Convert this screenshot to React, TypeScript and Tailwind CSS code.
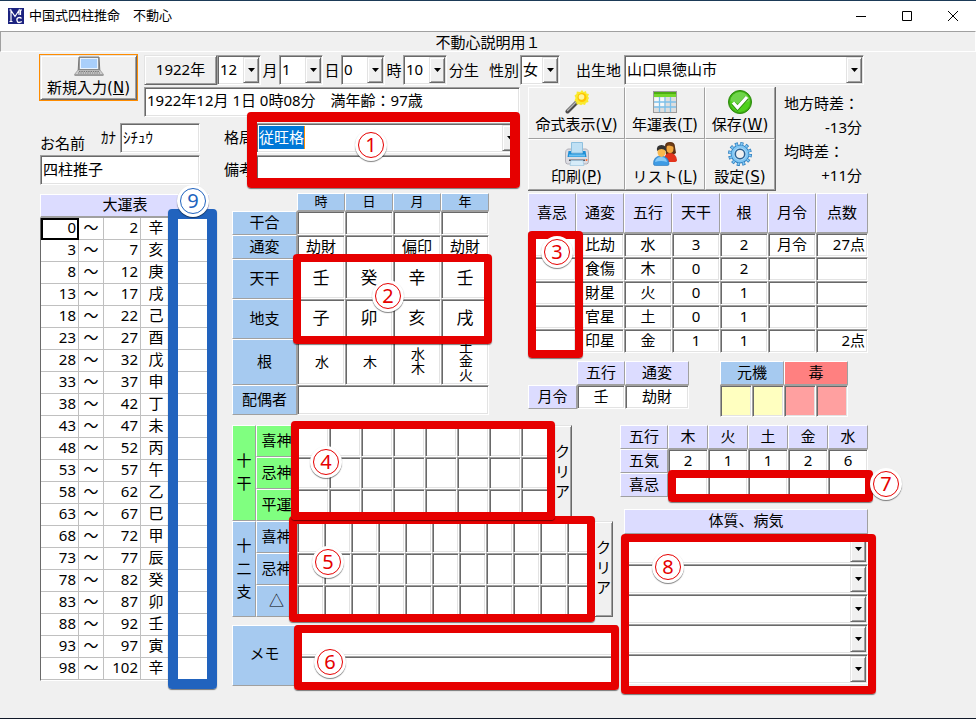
import React, { useState } from 'react';
import clsx from 'clsx';

const RAISED = 'border border-t-white border-l-white border-r-[#a0a0a0] border-b-[#a0a0a0]';
const SUNKEN =
  'border border-t-[#a0a0a0] border-l-[#a0a0a0] border-r-white border-b-white shadow-[inset_1px_1px_0_#696969,inset_-1px_-1px_0_#e3e3e3]';
const BUTTON_3D =
  'border border-t-[#e3e3e3] border-l-[#e3e3e3] border-r-[#696969] border-b-[#696969] bg-[#f0f0f0] shadow-[inset_1px_1px_0_#fff,inset_-1px_-1px_0_#a0a0a0]';

const LILAC = 'bg-[#dcdcff]';
const SKY = 'bg-[#a6caf0]';
const GREEN = 'bg-[#80ff80]';

const luckStems = '辛亥庚戌己酉戊申丁未丙午乙巳甲辰癸卯壬寅辛'.split('');
const luckRows = luckStems.map((stem, i) => ({
  from: i === 0 ? 0 : i * 5 - 2,
  to: i * 5 + 2,
  stem,
}));

const pillars = [
  { name: '時', change: '劫財', stem: '壬', branch: '子', root: '水' },
  { name: '日', change: '', stem: '癸', branch: '卯', root: '木' },
  { name: '月', change: '偏印', stem: '辛', branch: '亥', root: '水木' },
  { name: '年', change: '劫財', stem: '壬', branch: '戌', root: '土金火' },
];

const pointHeads = ['喜忌', '通変', '五行', '天干', '根', '月令', '点数'];
const pointRows = [
  ['比劫', '水', '3', '2', '月令', '27点'],
  ['食傷', '木', '0', '2', '', ''],
  ['財星', '火', '0', '1', '', ''],
  ['官星', '土', '0', '1', '', ''],
  ['印星', '金', '1', '1', '', '2点'],
];

const elements = [
  { name: '木', count: 2 },
  { name: '火', count: 1 },
  { name: '土', count: 1 },
  { name: '金', count: 2 },
  { name: '水', count: 6 },
];

/* ---------- icons ---------- */

const LaptopIcon = () => (
  <svg width="30" height="21" viewBox="0 0 30 21">
    <path d="M5 1h20l.8 13H4.200z" fill="#9a9a9a" stroke="#777" />
    <rect x="6.500" y="2.500" width="17" height="10" fill="#a9cffb" stroke="#e8f3ff" />
    <path d="M4 14h22l3.500 4.500H.5z" fill="#cfcfcf" stroke="#8c8c8c" strokeWidth=".7" />
    <path d="M5 15.500h20M4 17h22" stroke="#777" strokeDasharray="1.500 .8" />
    <path d="M.5 18.500h29v1.500H.5z" fill="#9b9b9b" />
  </svg>
);

const WandIcon = () => (
  <svg width="24" height="24" viewBox="0 0 24 24">
    <path d="M2.500 21.500 13 11" stroke="#4a4a4a" strokeWidth="4" strokeLinecap="round" />
    <path d="M2.500 20.500 12.500 10.500" stroke="#b5b5b5" strokeWidth="1.500" strokeLinecap="round" />
    <path d="m17 0 1.600 2 2.400-1 .5 2.500 2.500.5-1 2.400 1 1.600-1 2 .5 2-2.500.7-1 2.300-2.400-.8-1.600 1-2-1-2.400.3-.4-2.600-1.700-1.500 1-2.400-1-2.400L11.500 4l.3-2.400 3.400.3z" fill="#f9ea2e" />
    <circle cx="17" cy="7.500" r="4.500" fill="#ffc400" />
    <circle cx="16.500" cy="7" r="2.800" fill="#fff59a" />
  </svg>
);

const SheetIcon = () => (
  <svg width="24" height="24" viewBox="0 0 24 24">
    <rect x=".5" y="1.500" width="23" height="21" fill="#dedede" stroke="#9b9b9b" />
    <rect x="1" y="2" width="22" height="5" fill="#74d62c" />
    <rect x="1" y="2" width="22" height="2" fill="#4cae12" />
    <path d="M1.500 7.500h10v9h-10z" fill="#f8f8f8" />
    <path d="M6.500 7v15M12 7v15M17.500 7v15M1 12h22M1 17h22" stroke="#7cc0ea" strokeWidth="1.300" />
  </svg>
);

const CheckIcon = () => (
  <svg width="24" height="24" viewBox="0 0 24 24">
    <circle cx="12" cy="12" r="11.500" fill="#3fae14" stroke="#2b8a0c" />
    <circle cx="12" cy="12" r="10" fill="#4fd11c" />
    <path d="M2.500 11a9.500 9 0 0 1 19 0q-9.500 5-19 0z" fill="#6fd44a" />
    <path d="m5 13 4.500 5 9.500-10.500" fill="none" stroke="#2f8d10" strokeWidth="4.500" />
    <path d="m5 12.500 4.500 5L19 7" fill="none" stroke="#fff" strokeWidth="3.300" />
  </svg>
);

const PrinterIcon = () => (
  <svg width="24" height="24" viewBox="0 0 24 24">
    <path d="M2.500 7h19q2 1 2 4v8q0 3-2 3h-19q-2 0-2-3v-8q0-3 2-4z" fill="#dcdce2" stroke="#9a9aa4" strokeWidth=".7" />
    <path d="M3.500 9h17l1 6h-19z" fill="#1f8fd6" />
    <path d="M4 12.500h16v2H4z" fill="#6ec2f2" />
    <path d="M6.500.5h11V11h-11z" fill="#bfe0f4" stroke="#8fc0de" />
    <path d="M4 17.500h16V19H4z" fill="#54545e" />
    <path d="M6 18.500h12l1 5H5z" fill="#d6ecf9" stroke="#9cc6df" strokeWidth=".7" />
    <circle cx="21.500" cy="18" r="1" fill="#ff6a2a" />
  </svg>
);

const PeopleIcon = () => (
  <svg width="24" height="24" viewBox="0 0 24 24">
    <path d="M12 4q0-4 5-4t5 5l1 6-3 2h-7z" fill="#5d3213" />
    <path d="M11 19q0-8 6-8t7 7q0 2-3 2H11z" fill="#e3341c" />
    <ellipse cx="17" cy="6.500" rx="3.500" ry="4.500" fill="#f4a93f" />
    <path d="M13 5q2-3 8 0l-1-3-4-1.500z" fill="#6f3f19" />
    <path d="M.5 22q0-8 7.500-8t8 8q0 1.500-2 1.500H2.500q-2 0-2-1.500z" fill="#3e9be4" stroke="#2574b9" strokeWidth=".6" />
    <path d="M2 20q1-5 6-5t6 5q-6-2-12 0z" fill="#8acbf7" />
    <ellipse cx="8.500" cy="10" rx="4" ry="5" fill="#f9b84e" />
    <path d="M4 9q-1-6 4.500-6T13 9q-2-2-4.500-2T4 9z" fill="#333" />
  </svg>
);

const GearIcon = () => (
  <svg width="24" height="24" viewBox="0 0 24 24">
    <circle cx="12" cy="12" r="10" fill="none" stroke="#2f7fbe" strokeWidth="4" strokeDasharray="3 2.236" />
    <circle cx="12" cy="12" r="9.400" fill="#2f7fbe" />
    <circle cx="12" cy="12" r="10" fill="none" stroke="#7fc6f4" strokeWidth="2.400" strokeDasharray="1.800 3.436" strokeDashoffset="-.6" />
    <circle cx="12" cy="12" r="8.500" fill="#7fc6f4" />
    <circle cx="12" cy="12" r="6.500" fill="#a9d8f8" />
    <circle cx="12" cy="12" r="4.700" fill="#f0f0f0" stroke="#2c6294" strokeWidth="1.500" />
  </svg>
);

const AppIcon = () => (
  <svg width="16" height="16" viewBox="0 0 16 16" fill="none">
    <rect width="16" height="16" fill="#1c2380" />
    <path d="M1.500 13.500h3M3 13V2.500l4 6 4-6V7M1.500 2h2M10.500 2H14M12.500 2v5" stroke="#fff" strokeWidth="1.200" />
    <path d="M13.500 10.500q-1-1.500-3-.8t-1.500 2.800 2 2 2.800-1" stroke="#fff" strokeWidth="1.300" />
  </svg>
);

/* ---------- controls ---------- */

const DropArrow = ({ className = '' }: { className?: string }) => (
  <span className={clsx('pointer-events-none flex w-4 items-center justify-center', BUTTON_3D, className)}>
    <svg width="7" height="4" viewBox="0 0 7 4" className="shrink-0">
      <path d="M0 0h7L3.500 4z" />
    </svg>
  </span>
);

type ComboProps = { id?: string; label?: string; value?: string; className?: string };

const Combo = ({ id, label, value = '', className }: ComboProps) => (
  <div className={clsx('relative h-[30px] bg-white', SUNKEN, className)}>
    <select id={id} aria-label={label} className="block h-[26px] w-full appearance-none bg-transparent pl-0.5 outline-none">
      <option>{value}</option>
    </select>
    <DropArrow className="absolute inset-y-px right-px" />
  </div>
);

const Th = ({ className, children, ...rest }: React.ThHTMLAttributes<HTMLTableCellElement>) => (
  <th className={clsx('p-0 pb-0.5 text-center font-normal', RAISED, className)} {...rest}>
    {children}
  </th>
);

const Td = ({ className, children, ...rest }: React.TdHTMLAttributes<HTMLTableCellElement>) => (
  <td className={clsx('p-0 pb-0.5 text-center', SUNKEN, className ?? 'bg-white')} {...rest}>
    {children}
  </td>
);

const CellInput = ({ label }: { label: string }) => (
  <input aria-label={label} className="block h-4 w-full bg-transparent text-center outline-none" />
);

type ToolProps = { icon: React.ReactNode; text: string; accessKey: string };

const AccessKey = ({ children }: { children: string }) => (
  <span className="font-['DejaVu_Sans']">(<u>{children}</u>)</span>
);

const ToolButton = ({ icon, text, accessKey }: ToolProps) => (
  <button accessKey={accessKey} className={clsx('flex flex-col items-center pt-0.5', RAISED)}>
    {icon}
    <span className="whitespace-nowrap leading-5">
      {text}<AccessKey>{accessKey}</AccessKey>
    </span>
  </button>
);

type MarkerProps = { n: number; box: string; badge: string; thick?: boolean; blue?: boolean };

/* highlighted frame with a numbered badge */
const Marker = ({ n, box, badge, thick, blue }: MarkerProps) => (
  <div className={clsx('pointer-events-none absolute', box)}>
    <div
      className={clsx(
        'absolute inset-0 rounded-[4px] shadow-[0_1px_1px_rgba(0,0,0,0.5)]',
        thick ? 'border-[10px]' : 'border-8',
        blue ? 'border-[#2163be]' : 'border-[#e60000]'
      )}
    />
    <div className={clsx('absolute flex size-[32px] items-center justify-center rounded-full bg-white shadow-[0_1px_1px_rgba(0,0,0,0.5)]', badge)}>
      <span
        className={clsx(
          'flex size-[26px] items-center justify-center rounded-full border text-xl leading-none',
          blue ? 'border-[#2163be] text-[#2163be]' : 'border-[#e60000] text-[#e60000]'
        )}
      >
        {n}
      </span>
    </div>
  </div>
);

/* ---------- sections ---------- */

const TitleBar = () => (
  <header className="flex h-[30px] items-center bg-white pl-2">
    <AppIcon />
    <h1 className="ml-[5px] flex-1 pb-0.5 text-[13px] leading-5">中国式四柱推命　不動心</h1>
    <button aria-label="最小化" className="flex h-full w-[46px] items-center justify-center">
      <svg width="10" height="10" viewBox="0 0 10 10"><path d="M0 5.500h10" stroke="#000" /></svg>
    </button>
    <button aria-label="最大化" className="flex h-full w-[46px] items-center justify-center">
      <svg width="10" height="10" viewBox="0 0 10 10"><path d="M.5.5h9v9h-9z" stroke="#000" fill="none" /></svg>
    </button>
    <button aria-label="閉じる" className="flex h-full w-[46px] items-center justify-center">
      <svg width="10" height="10" viewBox="0 0 10 10"><path d="m0 0 10 10M10 0 0 10" stroke="#000" /></svg>
    </button>
  </header>
);

const BirthRow = () => (
  <div className="col-span-4 flex h-[31px] items-center whitespace-nowrap pt-px">
    <div className={clsx('flex h-[30px] w-[73px] items-center justify-center pb-0.5', BUTTON_3D)}>1922年</div>
    <Combo id="month" value="12" className="w-11" />
    <label htmlFor="month" className="w-[18px] text-center">月</label>
    <Combo id="day" value="1" className="w-11" />
    <label htmlFor="day" className="w-[18px] text-center">日</label>
    <Combo id="hour" value="0" className="w-11" />
    <label htmlFor="hour" className="w-[18px] text-center">時</label>
    <Combo id="minute" value="10" className="w-11" />
    <label htmlFor="minute" className="ml-0.5">分生</label>
    <label htmlFor="sex" className="ml-2.5 mr-px">性別</label>
    <Combo id="sex" value="女" className="w-10" />
    <label htmlFor="place" className="ml-4 mr-[3px]">出生地</label>
    <Combo id="place" value="山口県徳山市" className="w-60" />
  </div>
);

const NameForm = () => {
  const [name, setName] = useState('四柱推子');
  const [kana, setKana] = useState('ｼﾁｭｳ');
  const [pattern, setPattern] = useState('従旺格');

  return (
    <section className="relative col-span-3 flex h-[70px] justify-between pl-px">
      <div className="w-40">
        <div className="flex justify-between">
          <label htmlFor="name" className="self-end leading-5">お名前</label>
          <label htmlFor="kana" className="ml-auto mr-1 leading-7">ｶﾅ</label>
          <input id="kana" value={kana} onChange={e => setKana(e.target.value)} className={clsx('h-[30px] w-20 bg-white pl-0.5 pb-1 outline-none', SUNKEN)} />
        </div>
        <input id="name" value={name} onChange={e => setName(e.target.value)} className={clsx('mt-0.5 h-[30px] w-full bg-white px-0.5 pb-1 outline-none', SUNKEN)} />
      </div>
      <div className="mr-2 w-[296px]">
        <div className="flex items-center">
          <label htmlFor="pattern" className="w-8 pb-0.5">格局</label>
          <div className={clsx('flex h-[30px] flex-1 bg-white p-px', SUNKEN)}>
            <input id="pattern" value={pattern} onChange={e => setPattern(e.target.value)} className="ml-px mt-px h-[23px] w-[46px] border-r border-[#ff8c00] bg-[#0078d7] pb-0.5 text-white outline-none" />
            <DropArrow className="ml-auto" />
          </div>
        </div>
        <div className="mt-0.5 flex items-center">
          <label htmlFor="note" className="w-8 pb-0.5">備考</label>
          <input id="note" className={clsx('h-[30px] min-w-0 flex-1 bg-white px-1 outline-none', SUNKEN)} />
        </div>
      </div>
      <Marker n={1} thick box="left-[208px] -top-[11px] h-[76px] w-[273px]" badge="left-[108px] top-[17px]" />
    </section>
  );
};

const LuckTable = () => (
  <section className="relative col-span-2 row-span-2 w-[170px] pl-px pt-px">
    <table className="w-full table-fixed border-separate border-spacing-0 border-b border-l border-b-white border-l-[#696969]">
      <caption className={clsx('h-6 border-b-2 border-b-[#a0a0a0] border-l border-t border-l-white border-t-white leading-[18px]', LILAC)}>大運表</caption>
      <colgroup>
        <col className="w-[38px]" />
        <col className="w-[25px]" />
        <col className="w-[37px]" />
        <col className="w-[31px]" />
        <col />
      </colgroup>
      <tbody className="bg-white">
        {luckRows.map((row, i) => (
          <tr key={row.from} className="h-[22px] leading-[19px] [&>td]:border-b [&>td]:border-r [&>td]:border-[#c0c0c0] [&>td]:pb-0.5">
            <td className={clsx('p-0 pr-0.5 text-right', i === 0 && 'outline-2 -outline-offset-2 outline-black')}>{row.from}</td>
            <td className="p-0 text-center">～</td>
            <td className="p-0 pr-0.5 text-right">{row.to}</td>
            <td className="p-0 text-center">{row.stem}</td>
            <td className="p-0" />
          </tr>
        ))}
      </tbody>
    </table>
    <Marker n={9} thick blue box="left-[129px] top-4 h-[480px] w-[49px]" badge="left-[9px] -top-6" />
  </section>
);

const PillarTable = () => (
  <section className="relative">
    <table className="w-[257px] table-fixed border-separate border-spacing-0">
      <colgroup>
        <col className="w-[65px]" />
        {pillars.map(p => <col key={p.name} className="w-12" />)}
      </colgroup>
      <tbody>
        <tr className="h-[18px] text-[13px] leading-[14px]">
          <td className="p-0" />
          {pillars.map(p => <Th key={p.name} scope="col" className={SKY}>{p.name}</Th>)}
        </tr>
        <tr className="h-6 leading-5">
          <Th scope="row" className={SKY}>干合</Th>
          {pillars.map(p => <Td key={p.name} />)}
        </tr>
        <tr className="h-6 leading-5">
          <Th scope="row" className={SKY}>通変</Th>
          {pillars.map(p => <Td key={p.name}>{p.change}</Td>)}
        </tr>
        <tr className="h-10">
          <Th scope="row" className={SKY}>天干</Th>
          {pillars.map(p => <Td key={p.name} className="bg-white text-[17px]">{p.stem}</Td>)}
        </tr>
        <tr className="h-10">
          <Th scope="row" className={SKY}>地支</Th>
          {pillars.map(p => <Td key={p.name} className="bg-white text-[17px]">{p.branch}</Td>)}
        </tr>
        <tr className="h-[46px]">
          <Th scope="row" className={SKY}>根</Th>
          {pillars.map(p => (
            <Td key={p.name} className="bg-white text-sm leading-4">
              <span className="inline-block align-middle [writing-mode:vertical-rl]">{p.root}</span>
            </Td>
          ))}
        </tr>
        <tr className="h-[30px]">
          <Th scope="row" className={SKY}>配偶者</Th>
          <Td colSpan={4} />
        </tr>
      </tbody>
    </table>
    <Marker n={2} box="left-[61px] top-[61px] h-[90px] w-[199px]" badge="left-[79px] top-[26px]" />
  </section>
);

const ToolArea = () => (
  <div className="flex">
    <div className="grid h-[104px] w-[248px] grid-cols-[97px_80px_1fr] grid-rows-2 border-b border-r border-[#696969]">
      <ToolButton icon={<WandIcon />} text="命式表示" accessKey="V" />
      <ToolButton icon={<SheetIcon />} text="年運表" accessKey="T" />
      <ToolButton icon={<CheckIcon />} text="保存" accessKey="W" />
      <ToolButton icon={<PrinterIcon />} text="印刷" accessKey="P" />
      <ToolButton icon={<PeopleIcon />} text="リスト" accessKey="L" />
      <ToolButton icon={<GearIcon />} text="設定" accessKey="S" />
    </div>
    <dl className="ml-2 w-[78px] whitespace-nowrap pt-1 leading-6">
      <dt>地方時差：</dt>
      <dd className="text-right">-13分</dd>
      <dt>均時差：</dt>
      <dd className="text-right">+11分</dd>
    </dl>
  </div>
);

const PointSection = () => (
  <section className="relative mt-0.5">
    <table className="w-[340px] table-fixed border-separate border-spacing-0">
      <colgroup>
        {pointHeads.map((h, i) => <col key={h} className={i < 6 ? 'w-12' : ''} />)}
      </colgroup>
      <thead>
        <tr className="h-10">
          {pointHeads.map(h => <Th key={h} scope="col" className={LILAC}>{h}</Th>)}
        </tr>
      </thead>
      <tbody>
        {pointRows.map(row => (
          <tr key={row[0]} className="h-6 leading-5">
            <Td><CellInput label={`${row[0]} 喜忌`} /></Td>
            {row.map((v, i) => (
              <Td key={i} className={clsx('bg-white', i === 5 && 'pr-0.5 text-right!')}>{v}</Td>
            ))}
          </tr>
        ))}
      </tbody>
    </table>

    <div className="mt-2 flex items-start">
      <table className="w-[161px] table-fixed border-separate border-spacing-0 leading-5">
        <colgroup>
          <col className="w-[49px]" />
          <col className="w-12" />
          <col />
        </colgroup>
        <tbody>
          <tr className="h-6">
            <td className="p-0" />
            <Th scope="col" className={LILAC}>五行</Th>
            <Th scope="col" className={LILAC}>通変</Th>
          </tr>
          <tr className="h-6">
            <Th scope="row" className={LILAC}>月令</Th>
            <Td>壬</Td>
            <Td>劫財</Td>
          </tr>
        </tbody>
      </table>
      <table className="ml-[31px] w-32 table-fixed border-separate border-spacing-0 leading-5">
        <tbody>
          <tr className="h-6">
            <Th scope="col" colSpan={2} className={SKY}>元機</Th>
            <Th scope="col" colSpan={2} className="bg-[#ff8080]">毒</Th>
          </tr>
          <tr className="h-8">
            <Td className="bg-[#ffffc0]" />
            <Td className="bg-[#ffffc0]" />
            <Td className="bg-[#ffa0a0]" />
            <Td className="bg-[#ffa0a0]" />
          </tr>
        </tbody>
      </table>
    </div>
    <Marker n={3} box="left-0 top-[38px] h-[127px] w-[55px]" badge="left-[13px] top-[5px]" />
  </section>
);

type GodGridProps = { title: string; rows: string[]; count: number; color: string; cell: string };

const GodGrid = ({ title, rows, count, color, cell }: GodGridProps) => (
  <div className="flex h-24">
    <table className="table-fixed border-separate border-spacing-0">
      <tbody>
        {rows.map((name, r) => (
          <tr key={name} className="h-8">
            {r === 0 && (
              <Th scope="rowgroup" rowSpan={rows.length} className={color}>
                <div className="w-[22px] leading-[23px]">
                  {title.split('').map(c => <div key={c}>{c}</div>)}
                </div>
              </Th>
            )}
            <Th scope="row" className={color}>
              <div className="w-[39px] whitespace-nowrap">{name}</div>
            </Th>
            {Array.from({ length: count }, (_, i) => (
              <Td key={i}>
                <div className={cell}><CellInput label={`${name} ${i + 1}`} /></div>
              </Td>
            ))}
          </tr>
        ))}
      </tbody>
    </table>
    <button className={clsx('flex w-[19px] flex-col items-center justify-center pb-1 leading-5', BUTTON_3D)}>
      <span>ク</span>
      <span>リ</span>
      <span>ア</span>
    </button>
  </div>
);

const GodSection = () => (
  <section className="relative col-span-2">
    <GodGrid title="十干" rows={['喜神', '忌神', '平運']} count={8} color={GREEN} cell="w-[30px]" />
    <GodGrid title="十二支" rows={['喜神', '忌神', '△']} count={11} color={SKY} cell="w-[25px]" />
    <div className="mt-2 flex h-[61px]">
      <div className={clsx('flex w-[65px] items-center justify-center pb-1', SKY, RAISED)}>メモ</div>
      <div className="mr-0.5 flex flex-1 flex-col">
        <input aria-label="メモ 1" className={clsx('min-h-0 flex-1 bg-white px-1 outline-none', SUNKEN)} />
        <input aria-label="メモ 2" className={clsx('min-h-0 flex-1 bg-white px-1 outline-none', SUNKEN)} />
      </div>
    </div>
    <Marker n={5} box="left-[57px] top-[91px] h-[106px] w-[306px]" badge="left-[23px] top-[30px]" />
    <Marker n={4} box="left-[59px] -top-1 h-[99px] w-[264px]" badge="left-[19px] top-[25px]" />
    <Marker n={6} box="left-[62px] top-[200px] h-[65px] w-[325px]" badge="left-5 top-[21px]" />
  </section>
);

const BodySection = () => (
  <section className="relative w-[248px]">
    <table className="w-full table-fixed border-separate border-spacing-0 leading-5">
      <colgroup>
        <col className="w-12" />
        {elements.map(e => <col key={e.name} className="w-10" />)}
      </colgroup>
      <tbody>
        <tr className="h-6">
          <Th scope="row" className={LILAC}>五行</Th>
          {elements.map(e => <Th key={e.name} scope="col" className={LILAC}>{e.name}</Th>)}
        </tr>
        <tr className="h-6">
          <Th scope="row" className={LILAC}>五気</Th>
          {elements.map(e => <Td key={e.name}>{e.count}</Td>)}
        </tr>
        <tr className="h-6">
          <Th scope="row" className={LILAC}>喜忌</Th>
          {elements.map(e => <Td key={e.name}><CellInput label={`${e.name} 喜忌`} /></Td>)}
        </tr>
      </tbody>
    </table>
    <div className="ml-1 mt-3">
      <h2 className={clsx('h-[25px] text-center leading-5', LILAC, RAISED)}>体質、病気</h2>
      {[1, 2, 3, 4, 5].map(i => <Combo key={i} label={`体質、病気 ${i}`} />)}
    </div>
    <Marker n={7} box="left-12 top-[45px] h-8 w-[205px]" badge="left-[202px] -top-0.5" />
    <Marker n={8} box="left-px top-[109px] h-[160px] w-[255px]" badge="left-[31px] top-[17px]" />
  </section>
);

export default function App() {
  return (
    <div className="flex min-h-screen flex-col border-y border-t-[#1b3a57] border-b-[#101828] bg-[#f0f0f0] font-['Noto_Sans','Noto_Sans_CJK_JP',sans-serif] text-[15px] text-black">
      <TitleBar />
      <div className="h-[21px] border border-b-white border-l-[#a0a0a0] border-r-white border-t-[#a0a0a0] text-center leading-5">
        不動心説明用１
      </div>

      <main className="grid flex-1 grid-cols-[105px_88px_296px_92px_1fr] grid-rows-[33px_36px_70px_232px_1fr] pl-[39px] pt-0.5">
        <button accessKey="N" className="row-span-2 h-[47px] w-[99px] border border-[#ff8c00]">
          <span className={clsx('flex h-full flex-col items-center', BUTTON_3D)}>
            <LaptopIcon />
            <span className="leading-5">新規入力<AccessKey>N</AccessKey></span>
          </span>
        </button>
        <BirthRow />
        <div className={clsx('col-span-2 mr-2 h-[30px] bg-white pl-0.5 leading-6', SUNKEN)}>
          1922年12月 1日 0時08分　満年齢：97歳
        </div>
        <div className="col-span-2 row-span-3">
          <ToolArea />
          <PointSection />
        </div>
        <NameForm />
        <LuckTable />
        <PillarTable />
        <GodSection />
        <BodySection />
      </main>
    </div>
  );
}
